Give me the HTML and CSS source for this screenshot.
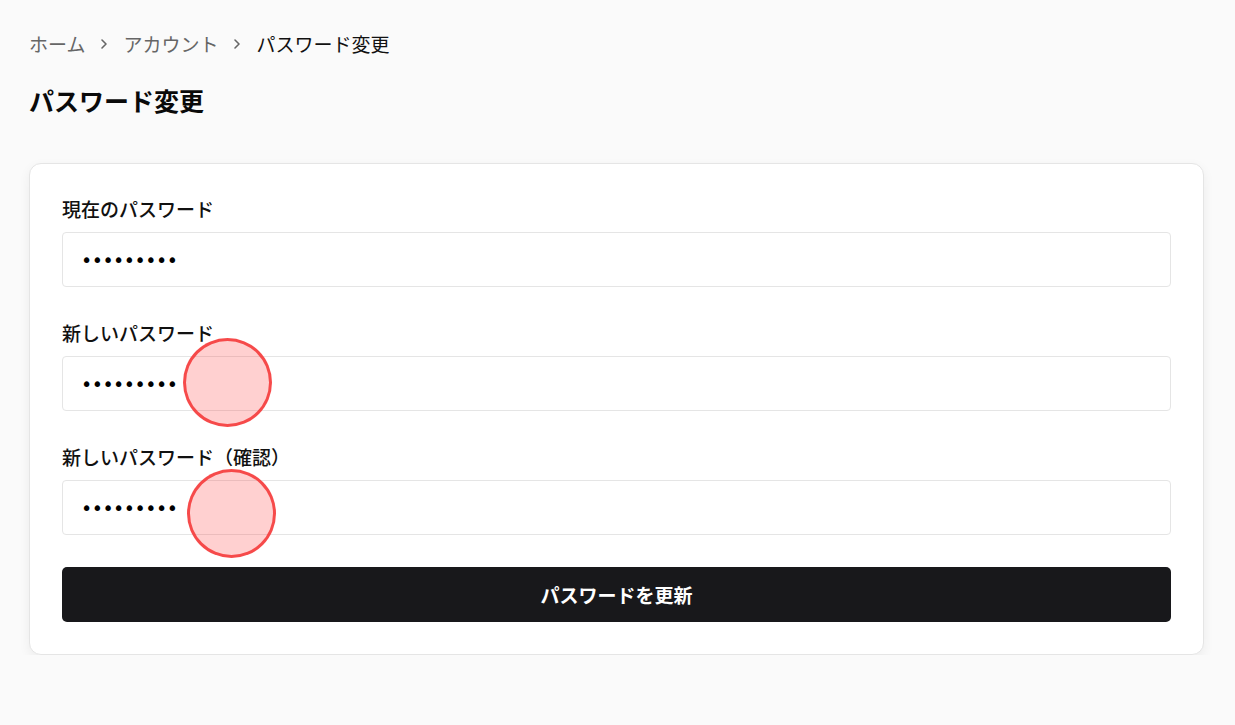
FILE: index.html
```html
<!DOCTYPE html>
<html lang="ja">
<head>
<meta charset="utf-8">
<title>パスワード変更</title>
<link rel="stylesheet" href="styles.css">
</head>
<body>
<main class="page">
  <nav class="crumbs">
    <span class="crumb">ホーム</span>
    <svg class="chev" viewBox="0 0 10 12" width="10" height="12"><path d="M3 2l4 4-4 4" fill="none" stroke="#666" stroke-width="1.6" stroke-linecap="round" stroke-linejoin="round"/></svg>
    <span class="crumb">アカウント</span>
    <svg class="chev" viewBox="0 0 10 12" width="10" height="12"><path d="M3 2l4 4-4 4" fill="none" stroke="#666" stroke-width="1.6" stroke-linecap="round" stroke-linejoin="round"/></svg>
    <span class="crumb current">パスワード変更</span>
  </nav>
  <h1 class="title">パスワード変更</h1>
  <form class="card">
    <div class="field">
      <label class="label">現在のパスワード</label>
      <div class="input"><span class="dots">•••••••••</span></div>
    </div>
    <div class="field">
      <label class="label">新しいパスワード</label>
      <div class="input"><span class="dots">•••••••••</span></div>
      <span class="tap tap1"></span>
    </div>
    <div class="field">
      <label class="label">新しいパスワード（確認）</label>
      <div class="input"><span class="dots">•••••••••</span></div>
      <span class="tap tap2"></span>
    </div>
    <button type="button" class="submit">パスワードを更新</button>
  </form>
</main>
</body>
</html>
```
FILE: styles.css
```css
* { box-sizing: border-box; }
html, body { margin: 0; padding: 0; }
body {
  background: #fafafa;
  font-family: "Noto Sans CJK JP", "Noto Sans", sans-serif;
  color: #111;
}
.page {
  padding: 30px 31px 0 29px;
}
.crumbs {
  display: flex;
  align-items: center;
  gap: 14px;
  font-size: 19px;
  line-height: 28px;
  color: #666;
}
.crumb.current { color: #111; }
.chev { display: block; }
.title {
  margin: 26px 0 0;
  font-size: 25px;
  line-height: 32px;
  font-weight: 700;
  color: #0a0a0a;
}
.card {
  margin-top: 47px;
  background: #fff;
  border: 1px solid #e5e5e5;
  border-radius: 12px;
  box-shadow: 0 4px 12px rgba(0,0,0,0.06);
  padding: 33px 32px 32px;
  display: flex;
  flex-direction: column;
}
.field {
  position: relative;
  display: flex;
  flex-direction: column;
  margin-bottom: 34px;
}
.label {
  font-size: 19px;
  line-height: 24px;
  font-weight: 500;
  color: #111;
  margin-bottom: 11px;
}
.input {
  height: 55px;
  border: 1px solid #e5e5e5;
  border-radius: 4px;
  background: #fff;
  display: flex;
  align-items: center;
  padding-left: 18px;
}
.dots {
  font-family: "DejaVu Sans", sans-serif;
  font-size: 19px;
  letter-spacing: -0.5px;
  color: #000;
}
.submit {
  height: 55px;
  border: none;
  border-radius: 5px;
  background: #18181b;
  color: #fff;
  font-family: "Noto Sans CJK JP", "Noto Sans", sans-serif;
  font-size: 19px;
  font-weight: 700;
  margin-top: -2px;
}
.tap {
  position: absolute;
  width: 89px;
  height: 89px;
  border-radius: 50%;
  background: rgba(255, 60, 60, 0.24);
  border: 3px solid rgba(245, 60, 60, 0.9);
}
.tap1 { left: 121px; top: 17px; }
.tap2 { left: 125px; top: 24px; }
```
